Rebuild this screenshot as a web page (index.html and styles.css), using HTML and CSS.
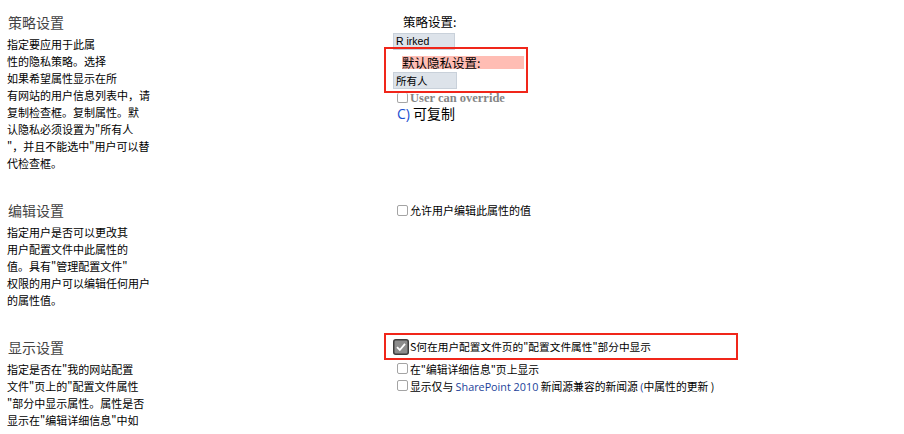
FILE: index.html
```html
<!DOCTYPE html>
<html lang="zh-CN">
  <head>
    <meta charset="UTF-8" />
    <title>用户配置文件属性设置</title>
    <link rel="stylesheet" href="styles.css">
  </head>
  <body>
    <div class="settings">
      <!-- 策略设置 -->
      <div class="info">
        <h2>策略设置</h2>
        <p>
          <span>指定要应用于此属</span>
          <span>性的隐私策略。选择</span>
          <span>如果希望属性显示在所</span>
          <span>有网站的用户信息列表中，请</span>
          <span>复制检查框。复制属性。默</span>
          <span>认隐私必须设置为"所有人</span>
          <span>"，并且不能选中"用户可以替</span>
          <span>代检查框。</span>
        </p>
      </div>
      <div class="controls">
        <div class="field-label">策略设置:</div>
        <div class="select">R irked</div>
        <div class="highlight privacy">
          <div class="field-label marked">默认隐私设置:</div>
          <div class="select wide">所有人</div>
        </div>
        <div class="override"><span class="box"></span><span>User can override</span></div>
        <div class="copy"><span class="blue">C)</span> 可复制</div>
      </div>

      <!-- 编辑设置 -->
      <div class="info">
        <h2>编辑设置</h2>
        <p>
          <span>指定用户是否可以更改其</span>
          <span>用户配置文件中此属性的</span>
          <span>值。具有"管理配置文件"</span>
          <span>权限的用户可以编辑任何用户</span>
          <span>的属性值。</span>
        </p>
      </div>
      <div class="controls">
        <label class="check first"><span class="box"></span><span>允许用户编辑此属性的值</span></label>
      </div>

      <!-- 显示设置 -->
      <div class="info">
        <h2>显示设置</h2>
        <p>
          <span>指定是否在"我的网站配置</span>
          <span>文件"页上的"配置文件属性</span>
          <span>"部分中显示属性。属性是否</span>
          <span>显示在"编辑详细信息"中如</span>
        </p>
      </div>
      <div class="controls">
        <div class="highlight display">
          <label class="check">
            <svg class="checked" width="16" height="16" viewBox="0 0 16 16">
              <rect x="0.75" y="0.75" width="14.5" height="14.5" rx="2" fill="#8c8c8c" stroke="#3c3c3c" stroke-width="1.5" />
              <path d="M4 8.2 L6.8 11 L12 4.8" fill="none" stroke="#fff" stroke-width="1.8" />
            </svg><span>S何在用户配置文件页的"配置文件属性"部分中显示</span>
          </label>
        </div>
        <label class="check"><span class="box"></span><span>在"编辑详细信息"页上显示</span></label>
        <label class="check"><span class="box"></span><span>显示仅与 <span class="blue">SharePoint 2010</span> 新闻源兼容的新闻源 <span class="blue">(</span>中属性的更新 )</span></label>
      </div>
    </div>
  </body>
</html>
```

FILE: styles.css
```css
body {
  margin: 0;
  padding: 10px 0 0 7px;
  background: #ffffff;
  color: #000000;
  font-family: "Noto Sans CJK SC", "Noto Sans", sans-serif;
}

.settings {
  display: grid;
  grid-template-columns: 385px 1fr;
  row-gap: 26px;
}

h2 {
  margin: 0 0 0 1px;
  font-size: 14px;
  font-weight: normal;
  line-height: 24px;
  color: #444444;
}

.info p {
  margin: 2px 0 0;
  font-size: 11px;
  line-height: 17px;
}

.info p span {
  display: block;
  white-space: nowrap;
}

.controls {
  font-size: 11px;
}

.field-label {
  font-size: 12.5px;
  line-height: 24px;
  padding-left: 11px;
}

.select {
  width: 58px;
  height: 15px;
  margin: -1px 0 0 1px;
  padding-left: 2px;
  background: #dde3ea;
  border: 1px solid #c9d1da;
  font-family: "Liberation Sans", sans-serif;
  font-size: 10.5px;
  line-height: 15px;
}

.highlight {
  border: 2px solid #f0261a;
  box-sizing: border-box;
  margin-left: -8px;
}

.privacy {
  width: 144px;
  height: 46px;
  margin-top: -3px;
  padding: 7px 0 0 16px;
}

.field-label.marked {
  padding-left: 0;
  width: 122px;
  line-height: 13px;
  background: #ffbdb4;
}

.select.wide {
  width: 60px;
  height: 15px;
  margin: 3px 0 0 -9px;
  font-family: "Noto Sans CJK SC", sans-serif;
  line-height: 15px;
}

.override {
  display: flex;
  align-items: center;
  height: 12px;
  margin-top: -1px;
  font-family: "Liberation Serif", serif;
  font-size: 12.5px;
  font-weight: bold;
  color: #858585;
  overflow: hidden;
}

.override .box {
  border-top: none;
  height: 9px;
}

.copy {
  margin-top: 0;
  padding-left: 5px;
  font-size: 14px;
  line-height: 18px;
}

.blue {
  color: #1b3f9a;
  font-family: "Open Sans", "Noto Sans", sans-serif;
}

.copy .blue {
  color: #1a4fd0;
}

.box {
  display: inline-block;
  width: 9px;
  height: 9px;
  margin: 0 2px 0 5px;
  border: 1px solid #a4a4a4;
  border-radius: 2px;
  flex-shrink: 0;
}

.check {
  display: flex;
  align-items: center;
  height: 17px;
  white-space: nowrap;
  font-size: 10.8px;
}

.check.first {
  height: 24px;
  font-size: 11px;
}

.display {
  width: 354px;
  height: 27px;
  margin-top: -2px;
  padding-left: 7px;
  display: flex;
  align-items: center;
}

.display .check {
  font-size: 10.7px;
}

.checked {
  margin-right: 1px;
  flex-shrink: 0;
}
```
